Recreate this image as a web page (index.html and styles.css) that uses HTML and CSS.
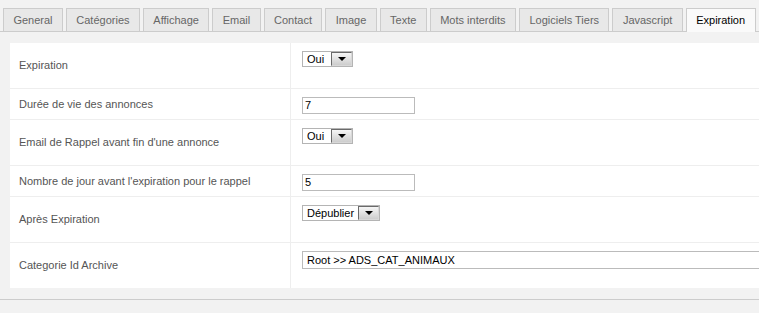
FILE: index.html
```html
<!DOCTYPE html>
<html lang="fr">
<head>
  <meta charset="UTF-8" />
  <title>Configuration - Expiration</title>
  <link rel="stylesheet" href="styles.css">
</head>
<body>

  <!-- Onglets -->
  <nav class="tabs">
    <span class="tab">General</span>
    <span class="tab">Catégories</span>
    <span class="tab">Affichage</span>
    <span class="tab">Email</span>
    <span class="tab">Contact</span>
    <span class="tab">Image</span>
    <span class="tab">Texte</span>
    <span class="tab">Mots interdits</span>
    <span class="tab">Logiciels Tiers</span>
    <span class="tab">Javascript</span>
    <span class="tab active">Expiration</span>
  </nav>

  <!-- Options d'expiration -->
  <section class="panel">
    <div class="row tall">
      <div class="label">Expiration</div>
      <div class="field">
        <span class="select">
          <span class="select-text yesno">Oui</span>
          <span class="select-btn"><i class="arrow"></i></span>
        </span>
      </div>
    </div>

    <div class="row short">
      <div class="label">Durée de vie des annonces</div>
      <div class="field"><span class="input">7</span></div>
    </div>

    <div class="row tall">
      <div class="label">Email de Rappel avant fin d'une annonce</div>
      <div class="field">
        <span class="select">
          <span class="select-text yesno">Oui</span>
          <span class="select-btn"><i class="arrow"></i></span>
        </span>
      </div>
    </div>

    <div class="row short">
      <div class="label">Nombre de jour avant l'expiration pour le rappel</div>
      <div class="field"><span class="input">5</span></div>
    </div>

    <div class="row tall">
      <div class="label">Après Expiration</div>
      <div class="field">
        <span class="select">
          <span class="select-text">Dépublier</span>
          <span class="select-btn"><i class="arrow"></i></span>
        </span>
      </div>
    </div>

    <div class="row last">
      <div class="label">Categorie Id Archive</div>
      <div class="field">
        <span class="select wide">
          <span class="select-text">Root &gt;&gt; ADS_CAT_ANIMAUX</span>
        </span>
      </div>
    </div>
  </section>

  <footer class="footer"></footer>

</body>
</html>
```

FILE: styles.css
```css
html, body {
  overflow: hidden;
}

body {
  margin: 0;
  background-color: #f2f2f2;
  font-family: "Liberation Sans", Arial, sans-serif;
  font-size: 11px;
  color: #555;
}

/* tabs */
.tabs {
  display: flex;
  align-items: flex-start;
  gap: 3px;
  padding: 8px 0 0 3px;
  border-bottom: 1px solid #ccc;
  height: 23px;
}

.tab {
  box-sizing: border-box;
  height: 23px;
  line-height: 22px;
  padding: 0 9.4px;
  border: 1px solid #ccc;
  border-bottom: none;
  background-color: #e8e8e8;
  color: #666;
  white-space: nowrap;
}

.tab.active {
  height: 24px;
  margin-bottom: -1px;
  background-color: #fafafa;
  color: #000;
}

/* panel */
.panel {
  margin: 11px 0 0 10px;
  background-color: #fff;
}

.row {
  box-sizing: border-box;
  display: grid;
  grid-template-columns: 281px 1fr;
  border-bottom: 1px solid #eee;
}

.row.tall {
  height: 46px;
}

.row.short {
  height: 31px;
}

.row.last {
  height: 45px;
  border-bottom: none;
}

.label {
  display: flex;
  align-items: center;
  padding: 0 0 1px 9px;
  border-right: 1px solid #eee;
  color: #555;
}

.field {
  padding: 8px 0 0 11px;
  white-space: nowrap;
  min-width: 0;
}

/* controls */
.input {
  box-sizing: border-box;
  display: block;
  width: 113px;
  height: 17px;
  line-height: 15px;
  padding-left: 2px;
  border: 1px solid #bbb;
  background-color: #fff;
  color: #000;
}

.select {
  box-sizing: border-box;
  display: inline-flex;
  height: 16px;
  border: 1px solid #b4b4b4;
  background-color: #fff;
  color: #000;
}

.select-text {
  padding: 0 4px;
  line-height: 14px;
}

.select-text.yesno {
  min-width: 20px;
}

.select-btn {
  box-sizing: border-box;
  width: 21px;
  height: 14px;
  display: flex;
  align-items: center;
  justify-content: center;
  border: 1px solid;
  border-color: #6a6a6a #d8d8d8 #d8d8d8 #6a6a6a;
  background: linear-gradient(#f6f6f6, #cdcdcd);
}

.arrow {
  width: 0;
  height: 0;
  border-left: 4px solid transparent;
  border-right: 4px solid transparent;
  border-top: 4px solid #000;
}

/* the list runs on past the right edge of the window */
.select.wide {
  display: flex;
  width: 100%;
  height: 18px;
  border-color: #bbb;
  border-right: none;
}

.select.wide .select-text {
  line-height: 16px;
}

.footer {
  margin-top: 11px;
  border-top: 1px solid #ccc;
  height: 20px;
}
```
